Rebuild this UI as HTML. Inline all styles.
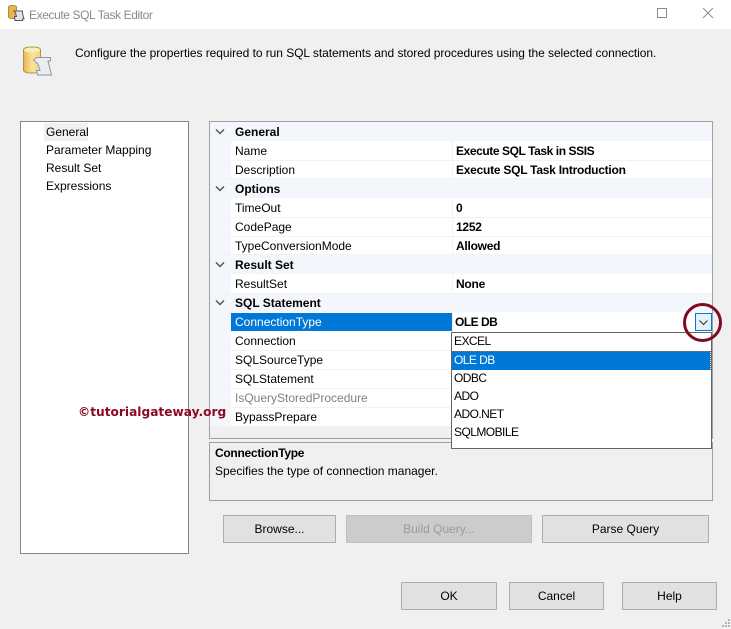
<!DOCTYPE html>
<html><head><meta charset="utf-8">
<style>
html,body{margin:0;padding:0}
body{width:731px;height:629px;overflow:hidden;background:#f0f0f0;position:relative;font:12px "Liberation Sans",sans-serif;color:#000}
div,span{position:absolute;white-space:nowrap;box-sizing:border-box}
svg{position:absolute}
.l{left:235px;height:18px;line-height:18px}
.v{left:456px;height:18px;line-height:18px;font-weight:bold;letter-spacing:-.25px}
.h{left:235px;height:18px;line-height:18px;font-weight:bold}
.sep{left:231px;width:481px;height:1px;background:#f2f2f2}
.gh{left:210px;width:502px;height:19px;background:#f3f6fb}
.nav{left:46px;height:18px;line-height:18px}
.btn{background:#e1e1e1;border:1px solid #adadad;text-align:center;line-height:26px}
.it{left:454px;height:18px;line-height:18px;letter-spacing:-.55px}
</style></head><body>
<div style="left:0;top:0;width:731px;height:29px;background:#fff"></div>
<svg style="left:7px;top:4px" width="20" height="20" viewBox="0 0 20 20"><path d="M1.500 3Q1.500 1.500 5.500 1.500Q9.500 1.500 9.500 3V13Q9.500 14.500 5.500 14.500Q1.500 14.500 1.500 13Z" fill="#eab34a" stroke="#b5893a"/><path d="M7 7H15.500V9.500L17 15H15.500V16.500H8L7.500 12.500H9.500L8.500 9Z" fill="#dfe4ea" stroke="#4f5760"/></svg>
<div style="left:29px;top:6px;height:18px;line-height:18px;color:#8a8a8a;letter-spacing:-.4px">Execute SQL Task Editor</div>
<svg style="left:655px;top:5px" width="40" height="16"><rect x="2.500" y="3.500" width="9" height="9" fill="none" stroke="#8c8c8c"/></svg>
<svg style="left:700px;top:5px" width="16" height="16"><path d="M3 3L13 13M13 3L3 13" stroke="#8c8c8c" fill="none"/></svg>

<svg style="left:21px;top:45px" width="34" height="32" viewBox="0 0 34 32"><defs><linearGradient id="g" x1="0" x2="1" y1="0" y2="0"><stop offset="0" stop-color="#e6b64f"/><stop offset=".5" stop-color="#f7e39a"/><stop offset="1" stop-color="#f3d679"/></linearGradient></defs><path d="M2.500 5Q2.500 2 11 2Q19.500 2 19.500 5V25Q19.500 28 11 28Q2.500 28 2.500 25Z" fill="url(#g)" stroke="#b0914f"/><ellipse cx="11" cy="5" rx="8" ry="2.500" fill="#f8efb8"/><path d="M12.500 15L16 12.500H29.500V16H27L30.500 30H16.500L15.500 25.500H19L17 19Z" fill="#e9edf3" stroke="#8d96a3"/></svg>
<div style="left:75px;top:44px;height:18px;line-height:18px;letter-spacing:-.055px">Configure the properties required to run SQL statements and stored procedures using the selected connection.</div>

<div style="left:20px;top:121px;width:169px;height:433px;background:#fff;border:1px solid #828790"></div>
<div style="left:44px;top:123px;width:44px;height:18px;background:#f0f0f0"></div>
<div class="nav" style="top:123px">General</div>
<div class="nav" style="top:141px">Parameter Mapping</div>
<div class="nav" style="top:159px">Result Set</div>
<div class="nav" style="top:177px">Expressions</div>

<div style="left:209px;top:121px;width:504px;height:318px;background:#f0f0f0;border:1px solid #a0a0a0"></div>
<div style="left:210px;top:122px;width:502px;height:304px;background:#fff"></div>
<div style="left:210px;top:122px;width:21px;height:304px;background:#f3f6fb"></div>
<div style="left:452px;top:141px;width:1px;height:285px;background:#f2f2f2"></div>
<div class="gh" style="top:122px"></div>
<div class="gh" style="top:179px"></div>
<div class="gh" style="top:255px"></div>
<div class="gh" style="top:293px"></div>
<div class="sep" style="top:160px"></div>
<div class="sep" style="top:178px;left:210px;width:502px"></div>
<div class="sep" style="top:217px"></div>
<div class="sep" style="top:236px"></div>
<div class="sep" style="top:254px;left:210px;width:502px"></div>
<div class="sep" style="top:293px;left:210px;width:502px"></div>
<div class="sep" style="top:350px"></div>
<div class="sep" style="top:369px"></div>
<div class="sep" style="top:388px"></div>
<div class="sep" style="top:407px"></div>
<div class="sep" style="top:426px;background:#f0f0f0"></div>

<svg style="left:210px;top:122px" width="21" height="200" fill="none" stroke="#555" stroke-width="1.500"><path d="M6 7.500L10 11.500L14 7.500"/><path d="M6 64.500L10 68.500L14 64.500"/><path d="M6 140.500L10 144.500L14 140.500"/><path d="M6 178.500L10 182.500L14 178.500"/></svg>

<div class="h" style="top:123px">General</div>
<div class="l" style="top:142px">Name</div><div class="v" style="top:142px;letter-spacing:-.42px">Execute SQL Task in SSIS</div>
<div class="l" style="top:161px">Description</div><div class="v" style="top:161px">Execute SQL Task Introduction</div>
<div class="h" style="top:180px">Options</div>
<div class="l" style="top:199px">TimeOut</div><div class="v" style="top:199px">0</div>
<div class="l" style="top:218px">CodePage</div><div class="v" style="top:218px">1252</div>
<div class="l" style="top:237px">TypeConversionMode</div><div class="v" style="top:237px">Allowed</div>
<div class="h" style="top:256px">Result Set</div>
<div class="l" style="top:275px">ResultSet</div><div class="v" style="top:275px">None</div>
<div class="h" style="top:294px">SQL Statement</div>
<div style="left:231px;top:313px;width:221px;height:18px;background:#0078d7"></div>
<div class="l" style="top:313px;color:#fff">ConnectionType</div>
<div class="v" style="top:313px;left:455px;letter-spacing:-.5px">OLE DB</div>
<div class="l" style="top:332px">Connection</div>
<div class="l" style="top:351px">SQLSourceType</div>
<div class="l" style="top:370px">SQLStatement</div>
<div class="l" style="top:389px;color:#808080">IsQueryStoredProcedure</div>
<div class="l" style="top:408px">BypassPrepare</div>

<div style="left:78px;top:403px;font:bold 12.200px/18px 'DejaVu Sans',sans-serif;color:#8b0a1f">©tutorialgateway.org</div>

<div style="left:209px;top:442px;width:504px;height:59px;background:#f0f0f0;border:1px solid #a0a0a0"></div>
<div style="left:215px;top:444px;height:18px;line-height:18px;font-weight:bold;letter-spacing:-.28px">ConnectionType</div>
<div style="left:215px;top:462px;height:18px;line-height:18px">Specifies the type of connection manager.</div>

<div style="left:695px;top:313px;width:17px;height:18px;background:#e5f1fb;border:1px solid #0078d7"></div>
<svg style="left:695px;top:313px" width="17" height="18" fill="none" stroke="#333" stroke-width="1.100"><path d="M4.500 7.500L8.500 11.500L12.500 7.500"/></svg>

<div style="left:451px;top:332px;width:261px;height:117px;background:#fff;border:1px solid #646464"></div>
<div style="left:452px;top:351px;width:258px;height:19px;background:#0078d7"></div>
<div style="left:452px;top:351px;width:259px;height:1px;border-top:1px dotted #b06a20"></div>
<div style="left:710px;top:351px;width:1px;height:19px;border-left:1px dotted #555"></div>
<div class="it" style="top:332px">EXCEL</div>
<div class="it" style="top:351px;color:#fff">OLE DB</div>
<div class="it" style="top:369px">ODBC</div>
<div class="it" style="top:387px">ADO</div>
<div class="it" style="top:405px">ADO.NET</div>
<div class="it" style="top:423px">SQLMOBILE</div>

<svg style="left:680px;top:300px" width="46" height="46"><circle cx="22.500" cy="22.500" r="18" fill="none" stroke="#7f0a23" stroke-width="3"/></svg>

<div class="btn" style="left:223px;top:515px;width:113px;height:28px">Browse...</div>
<div class="btn" style="left:346px;top:515px;width:186px;height:28px;background:#cccccc;border-color:#bfbfbf;color:#9a9a9a">Build Query...</div>
<div class="btn" style="left:542px;top:515px;width:167px;height:28px">Parse Query</div>
<div class="btn" style="left:401px;top:582px;width:96px;height:28px">OK</div>
<div class="btn" style="left:509px;top:582px;width:95px;height:28px">Cancel</div>
<div class="btn" style="left:622px;top:582px;width:95px;height:28px">Help</div>

<svg style="left:719px;top:617px" width="12" height="12" fill="#b4b4b4"><rect x="9" y="2" width="2" height="2"/><rect x="6" y="5" width="2" height="2"/><rect x="9" y="5" width="2" height="2"/><rect x="3" y="8" width="2" height="2"/><rect x="6" y="8" width="2" height="2"/><rect x="9" y="8" width="2" height="2"/></svg>
</body></html>
